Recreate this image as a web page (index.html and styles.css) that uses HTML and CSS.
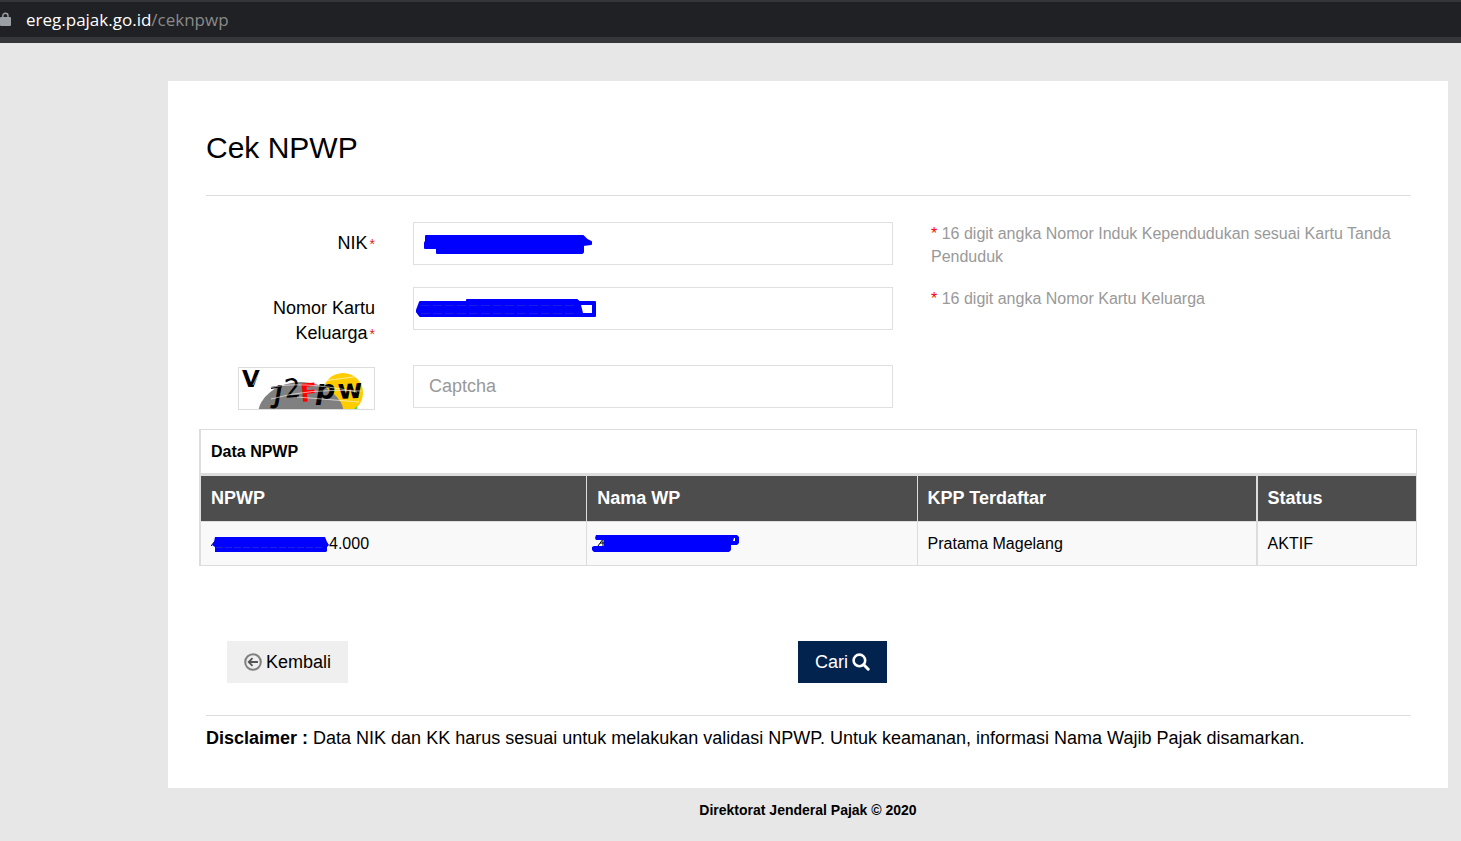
FILE: index.html
```html
<!DOCTYPE html>
<html lang="id">
<head>
    <meta charset="UTF-8">
    <meta name="viewport" content="width=device-width, initial-scale=1.0">
    <title>Cek NPWP</title>
    <link rel="stylesheet" href="styles.css">
</head>
<body>
    <div class="address-bar">
        <svg class="lock" width="11" height="15" viewBox="0 0 11 15">
            <path d="M2.8 6V3.8a2.6 2.6 0 0 1 5.2 0V6" fill="none" stroke="#9aa0a6" stroke-width="1.4"/>
            <rect x="0" y="5" width="11" height="9" rx="1" fill="#9aa0a6"/>
        </svg>
        <span class="url">ereg.pajak.go.id<span class="path">/ceknpwp</span></span>
    </div>

    <div class="page">
        <main class="panel">
            <h1 class="title">Cek NPWP</h1>

            <form onsubmit="return false">
                <div class="form-grid">
                    <label class="label" for="nik">NIK<span class="req">*</span></label>
                    <div class="field">
                        <input type="text" id="nik">
                        <svg class="scribble" width="190" height="43" viewBox="0 0 190 43">
                            <path d="M13 14H170L174 18L178 20V22L170 23V30L169 31H24V26H12V21L13 19Z" fill="#00f" stroke="#00f" stroke-width="2" stroke-linejoin="round"/>
                        </svg>
                    </div>
                    <p class="help"><span class="star">*</span> 16 digit angka Nomor Induk Kependudukan sesuai Kartu Tanda Penduduk</p>

                    <label class="label" for="kk">Nomor Kartu Keluarga<span class="req">*</span></label>
                    <div class="field">
                        <input type="text" id="kk">
                        <svg class="scribble" width="190" height="43" viewBox="0 0 190 43">
                            <path d="M7 15H54V13H164L166 15H182V29H7L4 25V23Z" fill="#00f" stroke="#00f" stroke-width="2" stroke-linejoin="round"/>
                            <path d="M168 18H179V26H170Z" fill="#fff"/>
                            <path d="M8 18.5H163M8 26.5H165" stroke="#1c1ce0" stroke-dasharray="9 3" fill="none"/>
                        </svg>
                    </div>
                    <p class="help"><span class="star">*</span> 16 digit angka Nomor Kartu Keluarga</p>

                    <svg class="captcha" viewBox="0 0 135 41" role="img" aria-label="Captcha">
                        <circle cx="104" cy="25" r="20" fill="#fc0"/>
                        <ellipse cx="62" cy="47" rx="43" ry="33" fill="#808080"/>
                        <g font-family="DejaVu Sans, sans-serif">
                            <text x="3" y="19" font-size="23" font-weight="bold">V</text>
                            <text x="34" y="35" font-size="25" stroke="#000" transform="rotate(10 34 35)">J</text>
                            <path d="M32 20L43 18" stroke="#000" stroke-width="2"/>
                            <text x="46" y="30" font-size="26" transform="rotate(-5 46 30)">2</text>
                            <text x="62" y="34" font-size="25" font-weight="bold" fill="#f00" transform="rotate(-5 62 34)">F</text>
                            <text x="77" y="31" font-size="27" font-weight="bold" font-style="italic">p</text>
                            <text x="99" y="31" font-size="27" font-weight="bold" transform="rotate(-3 99 31)">w</text>
                        </g>
                        <path d="M30 20Q60 12 118 24M32 31Q70 20 122 23M14 17L21 3M84 13L121 8M58 29L120 34" stroke="#fff" stroke-opacity=".6" fill="none"/>
                        <path d="M115 41L118 38V41Z" fill="#4d4"/>
                    </svg>
                    <div class="field">
                        <input type="text" id="captcha" placeholder="Captcha" aria-label="Captcha">
                    </div>
                </div>

                <table class="data">
                    <colgroup>
                        <col class="col-npwp">
                        <col class="col-nama">
                        <col class="col-kpp">
                        <col class="col-status">
                    </colgroup>
                    <thead>
                        <tr class="caption-row"><th colspan="4">Data NPWP</th></tr>
                        <tr class="head-row">
                            <th>NPWP</th>
                            <th>Nama WP</th>
                            <th>KPP Terdaftar</th>
                            <th>Status</th>
                        </tr>
                    </thead>
                    <tbody>
                        <tr>
                            <td>
                                <span class="masked">
                                    <svg width="118" height="20" viewBox="0 0 118 20">
                                        <path d="M0 12L4 7" stroke="#000" fill="none"/>
                                        <path d="M4 3H114L116 8L118 11L116 13V17L115 18H4V13L1 11L3 8Z" fill="#00f"/>
                                        <path d="M5 13.5H113" stroke="#2020e0" stroke-dasharray="7 2" fill="none"/>
                                    </svg>4.000
                                </span>
                            </td>
                            <td>
                                <span class="masked masked-name">
                                    <svg width="148" height="20" viewBox="0 0 148 20">
                                        <path d="M6 12L11 5V12M8 9H12" stroke="#000" fill="none"/>
                                        <path d="M4 1H145L147 3V9L145 11H139V16L137 18H2L0 16V13L2 12H12V6H4L3 4Z" fill="#00f"/>
                                        <path d="M142 4H143V7H141Z" fill="#fff"/>
                                    </svg>
                                </span>
                            </td>
                            <td>Pratama Magelang</td>
                            <td>AKTIF</td>
                        </tr>
                    </tbody>
                </table>

                <div class="form-grid">
                    <div class="actions">
                        <button type="button" class="btn btn-back">
                            <svg width="18" height="18" viewBox="0 0 18 18" fill="none">
                                <circle cx="9" cy="9" r="7.8" stroke="#808080" stroke-width="2"/>
                                <path d="M14 9H5M8.5 5.2L4.7 9L8.5 12.8" stroke="#555" stroke-width="1.8"/>
                            </svg>
                            Kembali
                        </button>
                        <button type="submit" class="btn btn-search">
                            Cari
                            <svg width="18" height="18" viewBox="0 0 18 18" fill="none" stroke="#fff">
                                <circle cx="7.4" cy="7.4" r="5.8" stroke-width="2.6"/>
                                <path d="M11.8 11.8L16.2 16.2" stroke-width="3" stroke-linecap="round"/>
                            </svg>
                        </button>
                    </div>
                </div>
            </form>

            <p class="disclaimer"><b>Disclaimer :</b> Data NIK dan KK harus sesuai untuk melakukan validasi NPWP. Untuk keamanan, informasi Nama Wajib Pajak disamarkan.</p>
        </main>
        <footer class="footer">Direktorat Jenderal Pajak © 2020</footer>
    </div>
</body>
</html>
```
FILE: styles.css
```css
* { box-sizing: border-box; }
body { margin: 0; background: #e7e7e7; color: #000; font-family: "Liberation Sans", Arial, sans-serif; font-size: 18px; line-height: 25px; }

.address-bar { display: flex; align-items: center; gap: 15px; height: 43px; background: #202124; border-top: 2px solid #35363a; border-bottom: 6px solid #35363a; }
.url { font-family: "Open Sans", "Noto Sans", sans-serif; font-size: 17px; color: #fff; }
.path { color: #8a8a8a; }

.page { margin: 38px 13px 0 168px; }
.panel { background: #fff; padding: 47px 37px 37px 38px; }
.title { margin: 0 0 26px; padding-bottom: 27px; border-bottom: 1px solid #ddd; font-size: 30px; font-weight: normal; line-height: 40px; }

.form-grid { display: grid; grid-template-columns: 169fr 480fr 480fr; gap: 19px 38px; align-items: start; }
.label { padding-top: 9px; text-align: right; }
.req { margin-left: 2px; color: #e02222; font-size: 14px; line-height: 14px; }
.star { color: #f00; }
.help { margin: 0; color: #999; font-size: 16px; line-height: 23px; }

.field { position: relative; }
.field input { display: block; width: 100%; height: 43px; padding: 0 15px; border: 1px solid #e0e0e0; background: #fff; font: inherit; }
.field input::placeholder { color: #999; }
.scribble { position: absolute; top: 0; left: 0; pointer-events: none; }
.captcha { justify-self: end; width: 137px; height: 43px; margin-top: 2px; border: 1px solid #ddd; }

.data { width: calc(100% + 13px); margin: 19px -6px 75px -7px; table-layout: fixed; border: 1px solid #ddd; border-left-width: 2px; border-spacing: 0; font-size: 16px; line-height: 23px; text-align: left; }
.data th, .data td { padding: 10px; }
.col-npwp { width: 31.7%; }
.col-nama { width: 27.2%; }
.col-kpp { width: 27.9%; }
.col-status { width: 13.2%; }
.caption-row th { border-bottom: 3px solid #ddd; }
.head-row th { background: #4d4d4d; color: #fff; font-size: 18px; line-height: 25px; border-bottom: 1px solid #ddd; }
.head-row th + th, .data td + td { border-left: 1px solid #ddd; }
.head-row th:last-child, .data td:last-child { border-left-width: 2px; }
.data td { background: #f9f9f9; }
.masked { display: flex; align-items: center; }
.masked-name { margin-left: -5px; }

.actions { grid-column: span 2; display: flex; justify-content: space-between; padding: 0 6px 0 21px; }
.btn { display: flex; align-items: center; gap: 4px; height: 42px; padding: 0 17px; border: 0; font: inherit; cursor: pointer; }
.btn-back { background: #efefef; color: #000; }
.btn-search { background: #03234f; color: #fff; }

.disclaimer { margin: 32px 0 0; padding-top: 10px; border-top: 1px solid #ddd; }
.footer { padding-top: 10px; text-align: center; font-size: 14px; font-weight: bold; }
```
